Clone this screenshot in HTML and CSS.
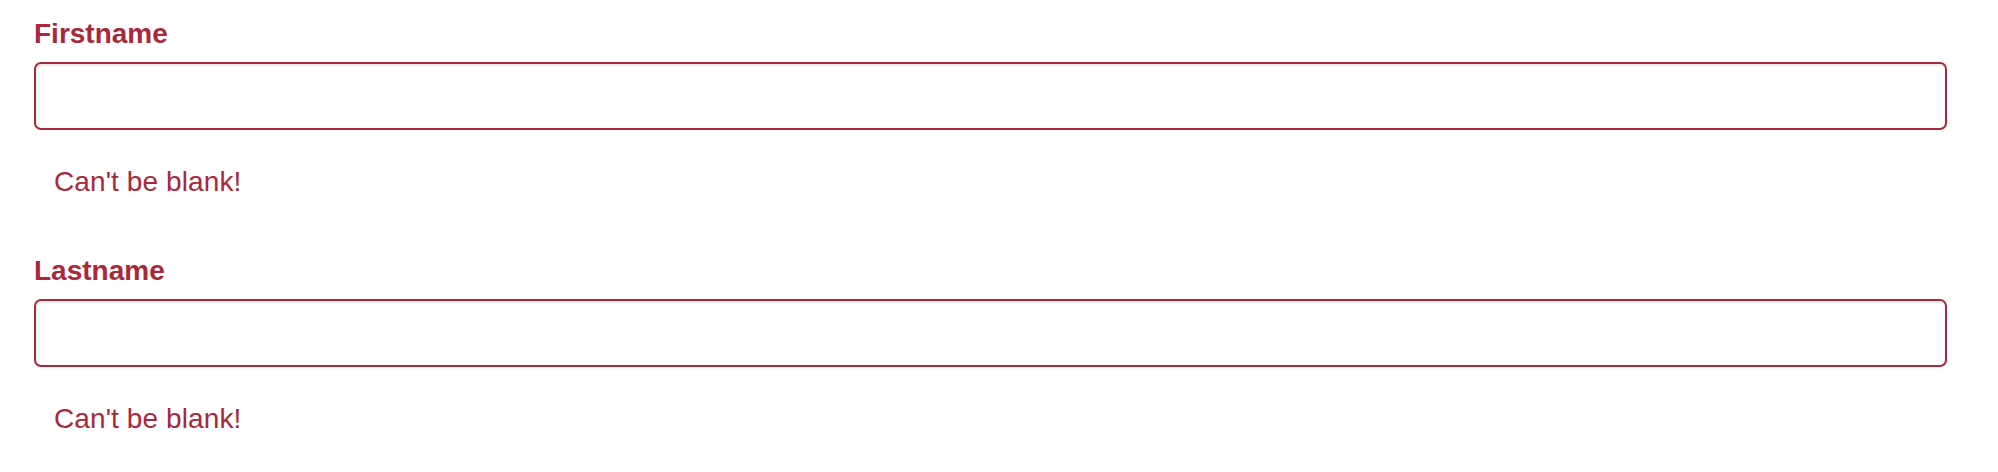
FILE: index.html
```html
<!DOCTYPE html>
<html lang="en">
<head>
<meta charset="utf-8">
<title>Form</title>
<link rel="stylesheet" href="styles.css">
</head>
<body>
<form class="form">
  <div class="group has-error">
    <label class="label" for="firstname">Firstname</label>
    <input class="control" id="firstname" type="text">
    <span class="help">Can't be blank!</span>
  </div>
  <div class="group has-error">
    <label class="label" for="lastname">Lastname</label>
    <input class="control" id="lastname" type="text">
    <span class="help">Can't be blank!</span>
  </div>
</form>
</body>
</html>
```
FILE: styles.css
```css
html, body {
  margin: 0;
  padding: 0;
  background: #ffffff;
}

body {
  font-family: "Liberation Sans", Arial, Helvetica, sans-serif;
  font-size: 28px;
  line-height: 40px;
  color: #a9283b;
}

.form {
  display: flex;
  flex-direction: column;
  gap: 47px;
  padding: 12px 51px 0 34px;
}

.group {
  display: flex;
  flex-direction: column;
}

.label {
  display: block;
  font-weight: bold;
  padding-top: 2px;
  margin: 0 0 8px 0;
  color: #a9283b;
}

.control {
  display: block;
  box-sizing: border-box;
  width: 100%;
  height: 68px;
  margin: 0;
  padding: 0 24px;
  font: inherit;
  border: 2px solid #a9283b;
  border-radius: 7px;
  background: #ffffff;
  box-shadow: inset 0 2px 2px rgba(0, 0, 0, 0.075);
  outline: none;
}

.help {
  display: block;
  margin-top: 32px;
  padding-left: 20px;
  letter-spacing: 0.1px;
  color: #a9283b;
}
```
